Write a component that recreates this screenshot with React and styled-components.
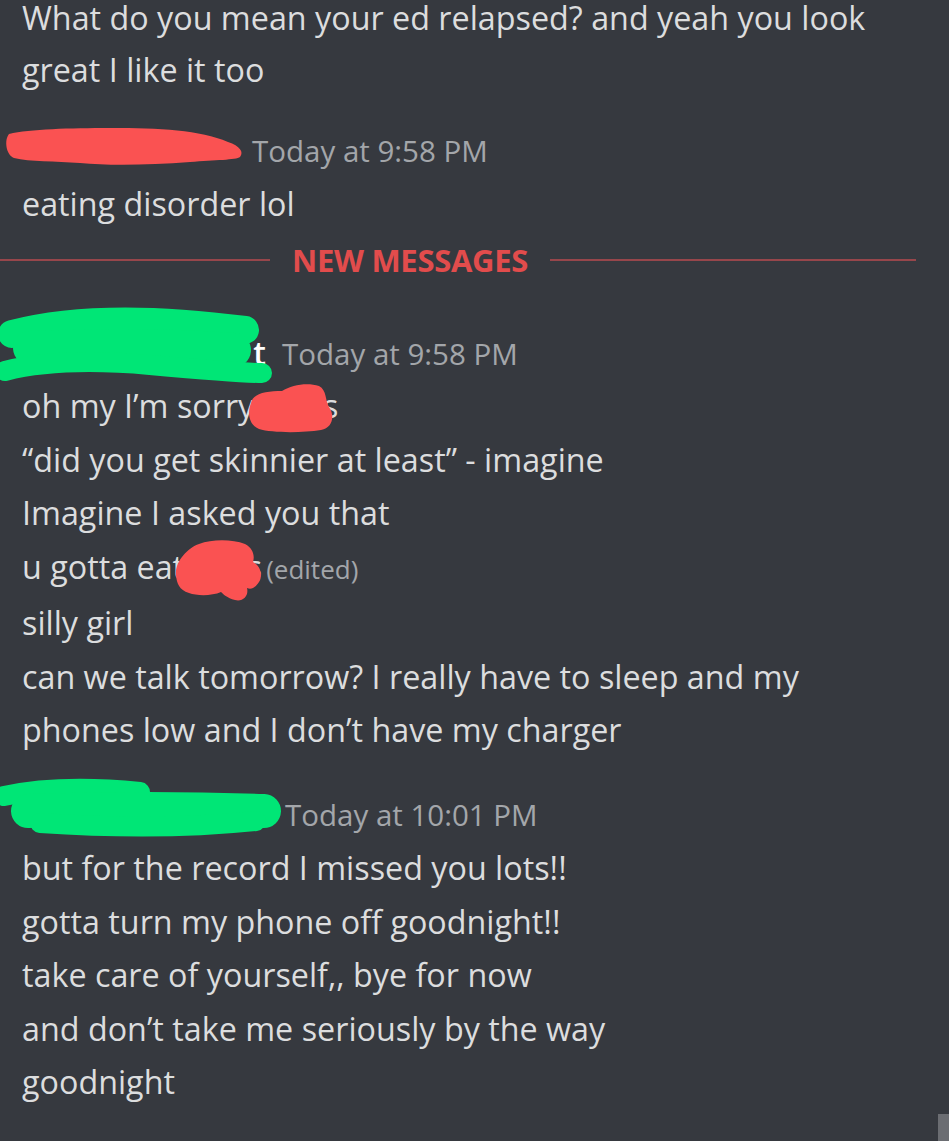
import React from 'react';
import styled, { createGlobalStyle } from 'styled-components';

const LINE = 53.5;

const GlobalStyle = createGlobalStyle`
  html, body {
    margin: 0;
    padding: 0;
    background: #36393f;
    overflow: hidden;
  }
  body {
    font-family: "Open Sans", "Liberation Sans", sans-serif;
    -webkit-font-smoothing: antialiased;
  }
`;

const Screen = styled.div`
  display: flex;
  height: 1141px;
  overflow: hidden;
  background: #36393f;
`;

const Chat = styled.div`
  flex: 1;
  display: flex;
  flex-direction: column;
  padding-right: 22px;
  min-width: 0;
`;

const ScrollTrack = styled.div`
  width: 11px;
  display: flex;
  flex-direction: column;
  justify-content: flex-end;
`;

const ScrollThumb = styled.div`
  height: 27px;
  background: #6b6d72;
`;

const Group = styled.div`
  margin-top: ${(p) => p.$gap}px;
`;

const Header = styled.div`
  position: relative;
  display: flex;
  align-items: baseline;
  height: ${LINE}px;
  line-height: ${LINE}px;
  padding-left: 22px;
`;

const NameSlot = styled.span`
  display: inline-block;
  width: ${(p) => p.$width}px;
  text-align: right;
  padding-right: ${(p) => p.$pad || 0}px;
  box-sizing: border-box;
  color: #ffffff;
  font-size: 32px;
  font-weight: 600;
`;

const Timestamp = styled.span`
  margin-left: 8px;
  color: #a3a6aa;
  font-size: 29.5px;
`;

const Line = styled.div`
  padding-left: 22px;
  color: #dcddde;
  font-size: 32.3px;
  line-height: ${(p) => p.$height || LINE}px;
  white-space: nowrap;
`;

const Masked = styled.span`
  position: relative;
  display: inline-block;
  vertical-align: top;
  width: ${(p) => p.$width}px;
  text-align: right;
`;

const Edited = styled.span`
  margin-left: 4px;
  color: #a3a6aa;
  font-size: 26px;
`;

const Scribble = styled.svg`
  position: absolute;
  left: ${(p) => p.$left}px;
  top: ${(p) => p.$top}px;
  overflow: visible;
  pointer-events: none;
`;

const Divider = styled.div`
  display: flex;
  align-items: center;
  margin: 13px 0 50px;
`;

const Rule = styled.div`
  height: 2px;
  background: #97464b;
  flex: ${(p) => (p.$fixed ? `0 0 ${p.$fixed}px` : '1')};
`;

const DividerLabel = styled.span`
  margin: 0 22px;
  color: #e24c4c;
  font-size: 31px;
  font-weight: 700;
  line-height: 32px;
  letter-spacing: -0.3px;
`;

const RED = '#fa5252';
const GREEN = '#00e676';

// marker scribbles over the usernames; x is measured from the row's left edge
const RedBar = () => (
  <Scribble $left={0} $top={-22} width="260" height="100">
    <path
      fill={RED}
      d="M9,32 C30,27 70,26 110,26 C160,26 200,28 228,40 C240,44 244,50 240,55 C236,58 215,58 190,60 C150,63 110,64 80,61 C55,59 30,60 14,56 C6,53 4,38 9,32 Z"
    />
  </Scribble>
);

const GreenBlob = () => (
  <Scribble $left={0} $top={-23} width="290" height="100">
    <g fill="none" stroke={GREEN} strokeLinecap="round" strokeLinejoin="round">
      <path strokeWidth="28" d="M12,31 Q100,8 245,27" />
      <path strokeWidth="34" d="M30,45 Q140,40 234,47" />
      <path strokeWidth="20" d="M5,68 Q60,54 150,62 T262,70" />
    </g>
  </Scribble>
);

const GreenStreak = () => (
  <Scribble $left={0} $top={-21} width="300" height="100">
    <g fill="none" stroke={GREEN} strokeLinecap="round" strokeLinejoin="round">
      <path strokeWidth="20" d="M4,29 Q60,17 140,25" />
      <path strokeWidth="34" d="M28,44 Q150,40 264,44" />
      <path strokeWidth="20" d="M40,56 Q160,64 256,54" />
    </g>
  </Scribble>
);

const SorryBlob = () => (
  <Scribble $left={-7} $top={-6} width="90" height="60">
    <path
      fill={RED}
      d="M4,30 C6,20 20,18 35,18 C45,12 60,9 72,13 C80,17 78,28 82,34 C88,42 86,55 74,57 C55,60 25,60 12,56 C2,52 0,40 4,30 Z"
    />
  </Scribble>
);

const EatBlob = () => (
  <Scribble $left={-7} $top={-2} width="90" height="66">
    <path
      fill={RED}
      d="M-1,38 C-3,25 10,10 22,6 C35,1 55,1 68,6 C76,10 78,18 76,24 C84,28 86,38 82,44 C78,50 74,52 70,50 C72,58 66,64 58,62 C50,60 46,56 44,54 C35,58 20,58 12,55 C2,52 0,45 -1,38 Z"
    />
  </Scribble>
);

export default function App() {
  return (
    <>
      <GlobalStyle />
      <Screen>
        <Chat>
          <Group $gap={-8}>
            <Line $height={51}>What do you mean your ed relapsed? and yeah you look</Line>
            <Line>great I like it too</Line>
          </Group>

          <Group $gap={27}>
            <Header>
              <NameSlot $width={222} />
              <Timestamp>Today at 9:58 PM</Timestamp>
              <RedBar />
            </Header>
            <Line>eating disorder lol</Line>
          </Group>

          <Divider>
            <Rule $fixed={270} />
            <DividerLabel>NEW MESSAGES</DividerLabel>
            <Rule />
          </Divider>

          <Group $gap={0}>
            <Header>
              <NameSlot $width={252} $pad={8}>t</NameSlot>
              <Timestamp>Today at 9:58 PM</Timestamp>
              <GreenBlob />
            </Header>
            <Line>
              oh my I’m sorry
              <Masked $width={84}>
                <SorryBlob />s
              </Masked>
            </Line>
            <Line>“did you get skinnier at least” - imagine</Line>
            <Line>Imagine I asked you that</Line>
            <Line>
              u gotta eat
              <Masked $width={78}>
                <EatBlob />s
              </Masked>
              <Edited>(edited)</Edited>
            </Line>
            <Line>silly girl</Line>
            <Line>can we talk tomorrow? I really have to sleep and my</Line>
            <Line>phones low and I don’t have my charger</Line>
          </Group>

          <Group $gap={31}>
            <Header>
              <NameSlot $width={255} />
              <Timestamp>Today at 10:01 PM</Timestamp>
              <GreenStreak />
            </Header>
            <Line>but for the record I missed you lots!!</Line>
            <Line>gotta turn my phone off goodnight!!</Line>
            <Line>take care of yourself,, bye for now</Line>
            <Line>and don’t take me seriously by the way</Line>
            <Line>goodnight</Line>
          </Group>
        </Chat>
        <ScrollTrack>
          <ScrollThumb />
        </ScrollTrack>
      </Screen>
    </>
  );
}
